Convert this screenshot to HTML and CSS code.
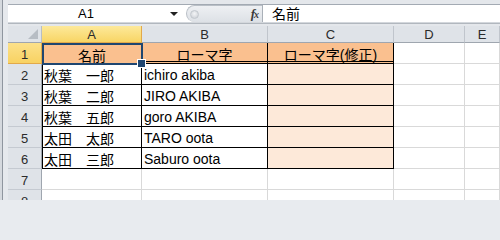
FILE: index.html
```html
<!DOCTYPE html>
<html lang="ja">
<head>
<meta charset="utf-8">
<link rel="stylesheet" href="styles.css">
</head>
<body>
<div class="app">
  <div class="frame"></div>
  <div class="main">
    <div class="topbar">
      <div class="fbar">
        <div class="namebox"><span class="ref">A1</span><span class="caret"></span></div>
        <div class="pill"><span class="knob"></span><span class="fx"><i>f</i><i class="sub">x</i></span></div>
        <div class="formula">名前</div>
      </div>
      <div class="under"></div>
    </div>
    <div class="sheet">
      <div class="corner"><span class="tri"></span></div>
      <div class="ch sel">A</div>
      <div class="ch">B</div>
      <div class="ch">C</div>
      <div class="ch">D</div>
      <div class="ch">E</div>

      <div class="rh sel">1</div>
      <div class="c t h1 a active center">名前</div>
      <div class="c t h1 center">ローマ字</div>
      <div class="c t h1 center">ローマ字(修正)</div>
      <div class="c"></div>
      <div class="c"></div>

      <div class="rh">2</div>
      <div class="c t a">秋葉　一郎</div>
      <div class="c t">ichiro akiba</div>
      <div class="c t fix"></div>
      <div class="c"></div>
      <div class="c"></div>

      <div class="rh">3</div>
      <div class="c t a">秋葉　二郎</div>
      <div class="c t">JIRO AKIBA</div>
      <div class="c t fix"></div>
      <div class="c"></div>
      <div class="c"></div>

      <div class="rh">4</div>
      <div class="c t a">秋葉　五郎</div>
      <div class="c t">goro AKIBA</div>
      <div class="c t fix"></div>
      <div class="c"></div>
      <div class="c"></div>

      <div class="rh">5</div>
      <div class="c t a">太田　太郎</div>
      <div class="c t">TARO oota</div>
      <div class="c t fix"></div>
      <div class="c"></div>
      <div class="c"></div>

      <div class="rh">6</div>
      <div class="c t a">太田　三郎</div>
      <div class="c t">Saburo oota</div>
      <div class="c t fix"></div>
      <div class="c"></div>
      <div class="c"></div>

      <div class="rh">7</div>
      <div class="c"></div>
      <div class="c"></div>
      <div class="c"></div>
      <div class="c"></div>
      <div class="c"></div>

      <div class="rh">8</div>
      <div class="c"></div>
      <div class="c"></div>
      <div class="c"></div>
      <div class="c"></div>
      <div class="c"></div>
    </div>
  </div>
</div>
</body>
</html>
```

FILE: styles.css
```css
* { box-sizing: border-box; }
html, body { margin: 0; padding: 0; }
body {
  width: 500px;
  height: 200px;
  overflow: hidden;
  background: #e8ebef;
  font-family: "Liberation Sans", "Noto Sans CJK JP", sans-serif;
}
.app {
  display: flex;
  width: 500px;
  height: 200px;
}
.frame {
  width: 8px;
  flex: none;
  background: #e6e9ed;
  border-left: 2px solid #d5d9de;
  border-right: 5px solid #e6e9ed;
  background-color: #8f969f;
}
.main {
  flex: 1;
  display: flex;
  flex-direction: column;
  min-width: 0;
}
.topbar {
  height: 28px;
  padding-top: 4px;
  background: #e4e7eb;
  display: flex;
  flex-direction: column;
}
.fbar {
  display: flex;
  height: 19px;
  border-top: 1px solid #a3aab3;
  background: #fff;
  border-bottom: 1px solid #d3d7dc;
}
.namebox {
  width: 178px;
  display: flex;
  align-items: center;
  position: relative;
  font-size: 13px;
  color: #000;
}
.ref {
  flex: 1;
  text-align: center;
  padding-right: 6px;
}
.caret {
  width: 0;
  height: 0;
  border-left: 4px solid transparent;
  border-right: 4px solid transparent;
  border-top: 4px solid #222;
  margin-right: 8px;
  margin-top: 1px;
}
.pill {
  width: 76px;
  display: flex;
  align-items: center;
  justify-content: space-between;
  background: linear-gradient(#eef0f3, #dde1e6);
  border-top: 1px solid #b9bfc6;
  border-left: 1px solid #b9bfc6;
  border-radius: 9px 0 0 9px;
  margin-top: 0;
  padding: 0 4px 0 3px;
}
.knob {
  width: 9px;
  height: 9px;
  border-radius: 50%;
  background: radial-gradient(circle at 50% 40%, #f4f5f7, #c7ccd2);
  border: 1px solid #c3c8ce;
}
.fx {
  font-family: "Liberation Serif", serif;
  font-weight: bold;
  font-size: 13px;
  color: #3a3a3a;
  letter-spacing: -1px;
}
.fx .sub { font-size: 10px; }
.formula {
  flex: 1;
  border-left: 1px solid #a9b0b8;
  padding-left: 9px;
  font-size: 14px;
  font-family: "Noto Sans CJK JP", sans-serif;
  line-height: 17px;
  color: #000;
}
.under {
  flex: 1;
  border-bottom: 1px solid #b1b7be;
  margin-bottom: 2px;
  background: #eceef1;
}
.sheet {
  flex: 1;
  display: grid;
  grid-template-columns: 34px 100px 126px 126px 71px 1fr;
  grid-template-rows: 17px repeat(8, 21px);
  background: #fff;
}
.corner {
  background: #dfe3e8;
  border-right: 1px solid #b8bec5;
  border-bottom: 1px solid #9fa6af;
  position: relative;
}
.tri {
  position: absolute;
  right: 3px;
  bottom: 3px;
  width: 0;
  height: 0;
  border-left: 10px solid transparent;
  border-bottom: 10px solid #b7bdc4;
}
.ch {
  background: #dfe3e8;
  border-right: 1px solid #c0c5cc;
  border-bottom: 1px solid #9fa6af;
  display: flex;
  align-items: center;
  justify-content: center;
  font-size: 13px;
  color: #2b2b2b;
  padding-top: 1px;
}
.rh {
  background: #dfe3e8;
  border-right: 1px solid #9fa6af;
  border-bottom: 1px solid #c5cad1;
  display: flex;
  align-items: center;
  justify-content: center;
  font-size: 13px;
  color: #2b2b2b;
  padding-top: 2px;
}
.ch.sel {
  background: linear-gradient(#fde99a, #f8d565);
  border-right-color: #e2a94a;
  border-bottom-color: #e2a94a;
}
.rh.sel {
  background: linear-gradient(#fce18a, #f8d262);
  border-right-color: #e2a94a;
  border-bottom-color: #e2a94a;
}
.c {
  border-right: 1px solid #d9d9d9;
  border-bottom: 1px solid #d9d9d9;
  font-size: 14px;
  color: #000;
  display: flex;
  align-items: center;
  padding: 2px 0 0 2px;
  white-space: nowrap;
  overflow: visible;
}
.c.t {
  border-right-color: #000;
  border-bottom-color: #000;
}
.c.a { border-left: 1px solid #000; padding-left: 1px; }
.c.h1 {
  background: #fac08f;
  border-bottom: 3px double #000;
  padding-top: 3px;
}
.c.center { justify-content: center; padding-left: 0; }
.c.fix { background: #fde9d9; }
.c.active {
  position: relative;
  border: 0;
}
.c.active::after {
  content: "";
  position: absolute;
  top: 0;
  left: 0;
  right: -1px;
  bottom: -1px;
  border: 2px solid #1f4670;
}
.c.active::before {
  content: "";
  position: absolute;
  right: -4px;
  bottom: -4px;
  width: 7px;
  height: 7px;
  background: #1f4670;
  border: 1px solid #fff;
  z-index: 2;
}
```
